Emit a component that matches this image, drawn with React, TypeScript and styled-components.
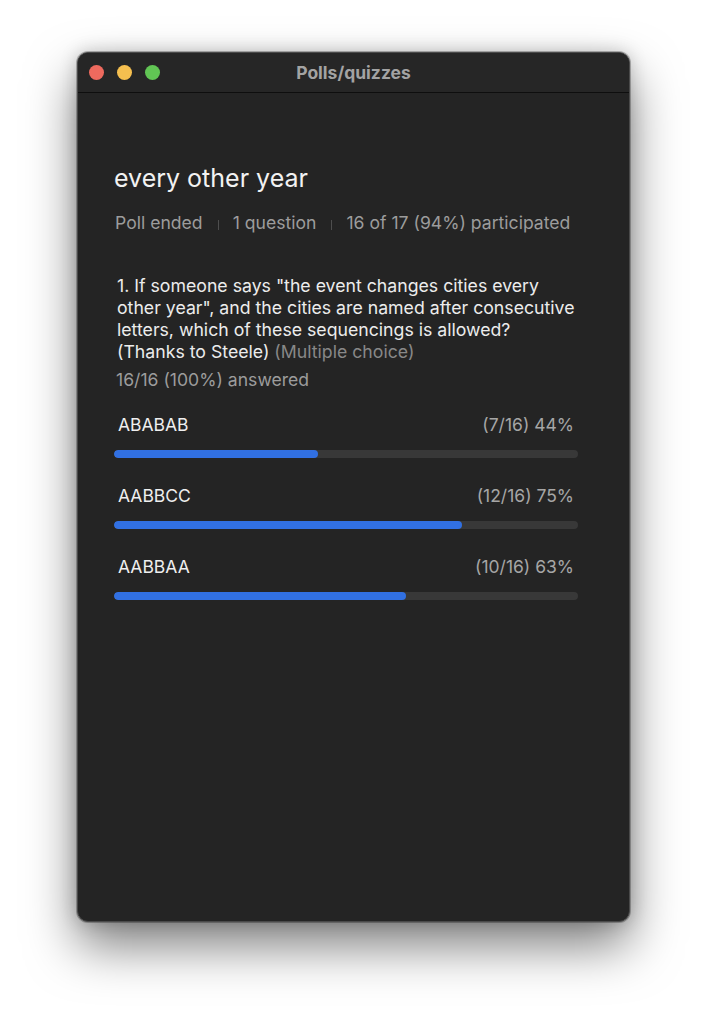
import React from "react";
import styled, { createGlobalStyle } from "styled-components";

const Global = createGlobalStyle`
  html, body { margin: 0; padding: 0; background: #ffffff; }
  body { font-family: Inter, "Noto Sans", "Liberation Sans", sans-serif; -webkit-font-smoothing: antialiased; }
`;

const Page = styled.div`
  width: 708px;
  height: 1024px;
  padding: 52px 0 0 77px;
  box-sizing: border-box;
`;

const Window = styled.div`
  width: 553px;
  height: 870px;
  background: #242424;
  border-radius: 11px;
  border: 1px solid #4a4a4a;
  box-sizing: border-box;
  box-shadow: 0 24px 50px rgba(0, 0, 0, 0.5), 0 0 0 1px rgba(0,0,0,0.25), 0 0 18px rgba(0,0,0,0.2);
  overflow: hidden;
  display: flex;
  flex-direction: column;
`;

const TitleBar = styled.div`
  height: 39px;
  flex: none;
  display: flex;
  align-items: center;
  position: relative;
  border-bottom: 1px solid #0e0e0e;
  background: #262626;
`;

const Lights = styled.div`
  display: flex;
  gap: 13px;
  padding-left: 11px;
`;

const Light = styled.span<{ $c: string }>`
  width: 15px;
  height: 15px;
  border-radius: 50%;
  background: ${(p) => p.$c};
`;

const Title = styled.div`
  position: absolute;
  left: 0;
  right: 0;
  text-align: center;
  font-size: 17.5px;
  font-weight: 700;
  color: #a3a3a3;
  pointer-events: none;
`;

const Content = styled.div`
  padding: 68px 51px 0 36px;
  display: flex;
  flex-direction: column;
`;

const Heading = styled.h1`
  margin: 0;
  font-size: 25px;
  font-weight: 400;
  color: #f2f2f2;
  line-height: 34px;
`;

const Meta = styled.div`
  margin-top: 17px;
  display: flex;
  align-items: center;
  font-size: 17.6px;
  color: #9c9c9c;
  line-height: 22px;
  padding-left: 1px;
`;

const Sep = styled.span`
  width: 1px;
  height: 10px;
  background: #4e4e4e;
  margin: 3px 14px 0 15px;
`;

const Question = styled.div`
  margin-top: 41px;
  margin-right: -2px;
  font-size: 17.7px;
  line-height: 22px;
  color: #ececec;
  padding-left: 3px;
`;

const Muted = styled.span`
  color: #888888;
`;

const Answered = styled.div`
  margin-top: 6px;
  font-size: 17.6px;
  line-height: 22px;
  color: #9c9c9c;
  padding-left: 2px;
`;

const Options = styled.div`
  margin-top: 23px;
  display: flex;
  flex-direction: column;
  gap: 27px;
`;

const Option = styled.div`
  display: flex;
  flex-direction: column;
  gap: 14px;
`;

const OptionHead = styled.div`
  display: flex;
  justify-content: space-between;
  padding: 0 4px;
  font-size: 17.5px;
  line-height: 22px;
`;

const Label = styled.span`
  color: #efefef;
`;

const Pct = styled.span`
  color: #a6a6a6;
`;

const Track = styled.div`
  height: 8px;
  border-radius: 4px;
  background: #383838;
  overflow: hidden;
`;

const Fill = styled.div`
  height: 100%;
  border-radius: 4px;
  background: #3170e2;
`;

const options = [
  { label: "ABABAB", count: "(7/16) 44%", pct: 44 },
  { label: "AABBCC", count: "(12/16) 75%", pct: 75 },
  { label: "AABBAA", count: "(10/16) 63%", pct: 63 },
];

export default function App() {
  return (
    <Page>
      <Global />
      <Window>
        <TitleBar>
          <Lights>
            <Light $c="#ee6a5e" />
            <Light $c="#f5bf4f" />
            <Light $c="#61c554" />
          </Lights>
          <Title>Polls/quizzes</Title>
        </TitleBar>
        <Content>
          <Heading>every other year</Heading>
          <Meta>
            <span>Poll ended</span>
            <Sep />
            <span>1 question</span>
            <Sep />
            <span>16 of 17 (94%) participated</span>
          </Meta>
          <Question>
            1. If someone says "the event changes cities every other year", and the cities are named after consecutive
            letters, which of these sequencings is allowed? (Thanks to Steele) <Muted>(Multiple choice)</Muted>
          </Question>
          <Answered>16/16 (100%) answered</Answered>
          <Options>
            {options.map((o) => (
              <Option key={o.label}>
                <OptionHead>
                  <Label>{o.label}</Label>
                  <Pct>{o.count}</Pct>
                </OptionHead>
                <Track>
                  <Fill style={{ width: `${o.pct}%` }} />
                </Track>
              </Option>
            ))}
          </Options>
        </Content>
      </Window>
    </Page>
  );
}
